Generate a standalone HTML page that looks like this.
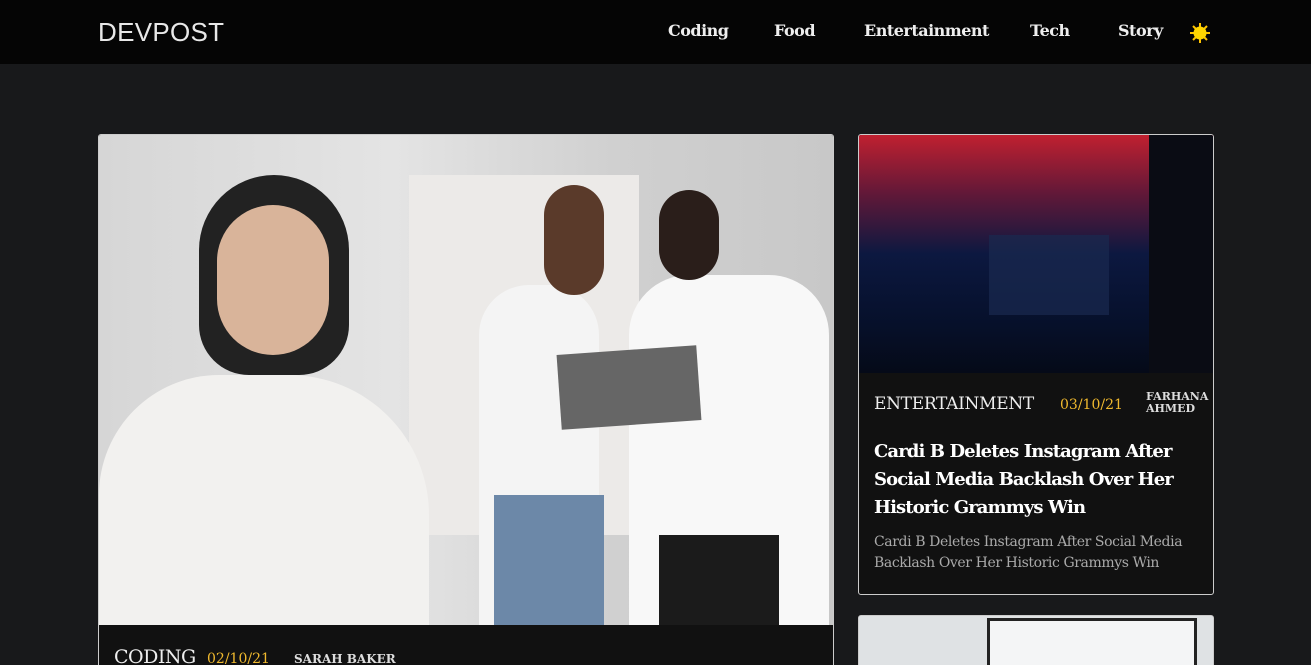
<!DOCTYPE html>
<html><head><meta charset="utf-8"><style>
*{margin:0;padding:0;box-sizing:border-box}
html,body{width:1311px;height:665px;overflow:hidden}
body{background:#18191b;font-family:"DejaVu Serif","Liberation Serif",serif;color:#fff;position:relative}
.nav{position:absolute;left:0;top:0;width:1311px;height:64px;background:#050505}
.logo{position:absolute;left:98px;top:17px;font-family:"Liberation Sans",sans-serif;font-size:26px;color:#e8e8e8;letter-spacing:0.3px}
.nav a{position:absolute;top:21px;font-size:16px;color:#eee;text-decoration:none;font-weight:bold;letter-spacing:-0.5px}
.card{position:absolute;background:#111;border:1px solid #ccc;border-radius:3px;overflow:hidden}
.meta{position:absolute;white-space:nowrap}
</style></head><body>
<div class="nav">
<div class="logo">DEVPOST</div>
<a style="left:668px">Coding</a>
<a style="left:774px">Food</a>
<a style="left:864px">Entertainment</a>
<a style="left:1030px">Tech</a>
<a style="left:1118px">Story</a>
<svg style="position:absolute;left:1189px;top:22px" width="22" height="22" viewBox="0 0 22 22"><g stroke="#ffc400" stroke-width="2"><line x1="11" y1="1" x2="11" y2="21"/><line x1="1" y1="11" x2="21" y2="11"/><line x1="4" y1="4" x2="18" y2="18"/><line x1="18" y1="4" x2="4" y2="18"/></g><circle cx="11" cy="11" r="6.5" fill="#ffd600"/></svg>
</div>
<div class="card" style="left:98px;top:134px;width:736px;height:560px">
<div style="position:absolute;left:0;top:0;width:736px;height:490px;background:linear-gradient(90deg,#d6d6d6 0%,#e4e4e4 40%,#d0d0d0 70%,#c8c8c8 100%)">
<div style="position:absolute;left:310px;top:40px;width:230px;height:360px;background:#eceae8"></div>
<div style="position:absolute;left:0;top:240px;width:330px;height:250px;background:#f2f1ef;border-radius:120px 140px 0 0"></div>
<div style="position:absolute;left:100px;top:40px;width:150px;height:200px;background:#222;border-radius:75px 75px 50px 50px"></div>
<div style="position:absolute;left:118px;top:70px;width:112px;height:150px;background:#d9b49a;border-radius:56px"></div>
<div style="position:absolute;left:380px;top:150px;width:120px;height:340px;background:#f4f4f4;border-radius:50px 50px 0 0"></div>
<div style="position:absolute;left:530px;top:140px;width:200px;height:350px;background:#f8f8f8;border-radius:60px 60px 0 0"></div>
<div style="position:absolute;left:445px;top:50px;width:60px;height:110px;background:#5a3a2a;border-radius:30px"></div>
<div style="position:absolute;left:560px;top:55px;width:60px;height:90px;background:#2a1e1a;border-radius:30px"></div>
<div style="position:absolute;left:560px;top:400px;width:120px;height:90px;background:#1b1b1b"></div>
<div style="position:absolute;left:395px;top:360px;width:110px;height:130px;background:#6c88a8"></div>
<div style="position:absolute;left:460px;top:215px;width:140px;height:75px;background:#666;transform:rotate(-4deg)"></div>
</div>
<div class="meta" style="left:15px;top:511px;font-size:19px;color:#eee;letter-spacing:-0.5px">CODING</div>
<div class="meta" style="left:108px;top:516px;font-size:14px;color:#f0b92e">02/10/21</div>
<div class="meta" style="left:195px;top:517px;font-size:12px;color:#ddd;font-weight:bold">SARAH BAKER</div>
</div>
<div class="card" style="left:858px;top:134px;width:356px;height:461px">
<div style="position:absolute;left:0;top:0;width:356px;height:238px;background:linear-gradient(180deg,#c02030 0%,#601838 25%,#0c1840 50%,#06102a 80%,#050a18 100%)">
<div style="position:absolute;left:130px;top:100px;width:120px;height:80px;background:#1a2a50;opacity:.7"></div>
<div style="position:absolute;left:290px;top:0;width:66px;height:238px;background:#0a0c14"></div>
</div>
<div class="meta" style="left:15px;top:259px;font-size:17px;color:#eee;letter-spacing:-0.3px">ENTERTAINMENT</div>
<div class="meta" style="left:201px;top:262px;font-size:14px;color:#f0b92e">03/10/21</div>
<div class="meta" style="left:287px;top:256px;font-size:11px;color:#ddd;font-weight:bold;line-height:12px">FARHANA<br>AHMED</div>
<div style="position:absolute;left:15px;top:303px;width:340px;font-size:18px;font-weight:bold;line-height:28px;letter-spacing:-0.9px;white-space:nowrap">Cardi B Deletes Instagram After<br>Social Media Backlash Over Her<br>Historic Grammys Win</div>
<div style="position:absolute;left:15px;top:397px;width:340px;font-size:14px;line-height:21px;color:#aaa;letter-spacing:-0.4px;white-space:nowrap">Cardi B Deletes Instagram After Social Media<br>Backlash Over Her Historic Grammys Win</div>
</div>
<div class="card" style="left:858px;top:615px;width:356px;height:100px;background:#dfe2e4">
<div style="position:absolute;left:128px;top:2px;width:210px;height:100px;background:#f4f5f6;border:3px solid #222"></div>
</div>
</body></html>
